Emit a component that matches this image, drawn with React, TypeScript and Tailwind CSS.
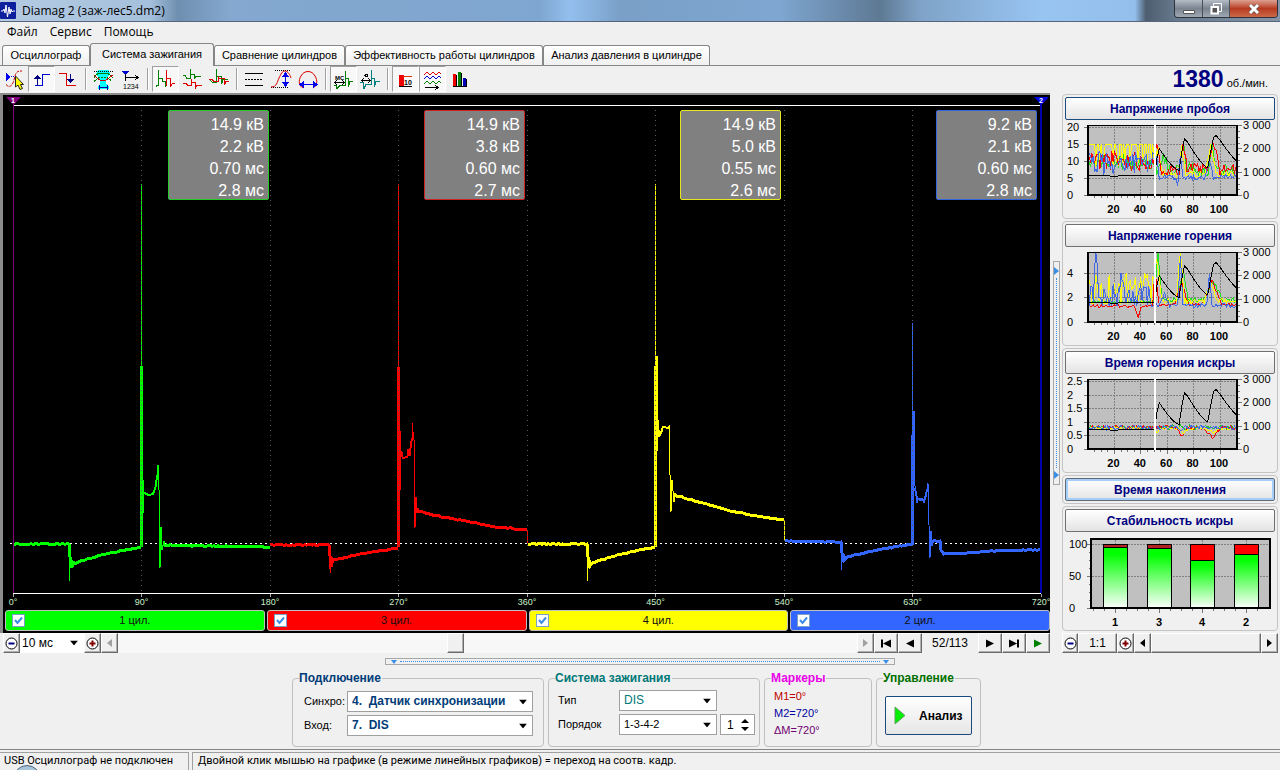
import { useState } from 'react';
import type { ReactNode } from 'react';

type Point = [number, number];

const GREEN = '#00ff00';
const RED = '#ff0000';
const YELLOW = '#ffff00';
const BLUE = '#3366ff';

const tabs = [
  { title: 'Осциллограф', width: 'w-[88px]' },
  { title: 'Система зажигания', width: 'w-[124px]' },
  { title: 'Сравнение цилиндров', width: 'w-[131px]' },
  { title: 'Эффективность работы цилиндров', width: 'w-[198px]' },
  { title: 'Анализ давления в цилиндре', width: 'w-[167px]' },
];

const cylinders = [
  { name: '1 цил.', bg: 'bg-[#00ff00]', border: 'border-[#22cc22]', values: ['14.9 кВ', '2.2 кВ', '0.70 мс', '2.8 мс'] },
  { name: '3 цил.', bg: 'bg-[#ff0000]', border: 'border-[#cc2222]', values: ['14.9 кВ', '3.8 кВ', '0.60 мс', '2.7 мс'] },
  { name: '4 цил.', bg: 'bg-[#ffff00]', border: 'border-[#e6e622]', values: ['14.9 кВ', '5.0 кВ', '0.55 мс', '2.6 мс'] },
  { name: '2 цил.', bg: 'bg-[#3366ff]', border: 'border-[#3366dd]', values: ['9.2 кВ', '2.1 кВ', '0.60 мс', '2.8 мс'] },
];

const degrees = ['0°', '90°', '180°', '270°', '360°', '450°', '540°', '630°', '720°'];

// simple repeatable noise, -1..1
const makeNoise = (seed: number) => {
  let s = seed;
  return () => {
    s = (s * 1103515245 + 12345) % 2147483648;
    return (s / 2147483648) * 2 - 1;
  };
};

// long pieces are cut in 2px steps and get a bit of noise
const trace = (points: Point[], seed: number) => {
  const noise = makeNoise(seed);
  let d = `M${points[0][0]} ${points[0][1]}`;
  for (let i = 1; i < points.length; i++) {
    const [x0, y0] = points[i - 1];
    const [x1, y1] = points[i];
    const steps = Math.floor((x1 - x0) / 2);
    if (steps > 3) {
      for (let k = 1; k < steps; k++) {
        const t = k / steps;
        d += `L${(x0 + (x1 - x0) * t).toFixed(1)} ${(y0 + (y1 - y0) * t + noise() * 0.5).toFixed(1)}`;
      }
    }
    d += `L${x1} ${y1}`;
  }
  return d;
};

const waves: { color: string; main: Point[]; spikes: string; thin: string }[] = [
  {
    color: GREEN,
    main: [[13, 544], [69, 544], [70, 557], [71, 568], [71, 560], [72, 567], [73, 561], [74, 564], [87, 559], [110, 553], [141, 547]],
    spikes: 'M141.5 366V547M142.5 480V513',
    thin: 'M69.5 544V581M141.5 184V366M142 488L143 492L146 493L148 495L152 494L155 488L157 475L158 465L159 490L159 562L160 568L161 527L162 550L164 541L165 545L167 543',
  },
  {
    color: RED,
    main: [[270, 545], [329, 545], [330, 556], [331, 567], [331, 557], [332, 563], [333, 560], [360, 554], [398, 548]],
    spikes: 'M398.5 367V547M399.5 431V490',
    thin: 'M329.5 545V565L330.5 573V556M398.5 184V367M400 450L402 452L403 458L407 457L408 449L410 456L411 447L412 438L412 423L414 440V515L415 528L416 497L417 513L418 508L419 511',
  },
  {
    color: YELLOW,
    main: [[528, 544], [587, 544], [588, 557], [589, 568], [589, 560], [590, 566], [592, 563], [617, 555], [655, 547]],
    spikes: 'M655.5 366V547M656.5 356V451',
    thin: 'M587.5 544V581M655.5 184V366M657 408L658 427L659 437L662 432L663 426L667 428L669 426V472L670 475L671 512L672 480L674 502L675 493L677 496M784.5 520V541',
  },
  {
    color: BLUE,
    main: [[785, 541], [841, 542], [842, 553], [842, 562], [843, 554], [844, 560], [847, 557], [873, 551], [912, 544]],
    spikes: 'M912.5 435V545M913.5 411V480',
    thin: 'M841.5 542V570M912.5 323V435M914 478L916 493L917 503L918 499L922 498L924 503L926 497L928 483L929 525L930 558L931 531L932 546L934 540',
  },
];

const tails: { color: string; points: Point[] }[] = [
  { color: GREEN, points: [[164, 545], [200, 546], [270, 547]] },
  { color: RED, points: [[417, 511], [437, 516], [470, 522], [497, 527], [527, 530]] },
  { color: YELLOW, points: [[674, 495], [703, 503], [730, 511], [757, 516], [784, 520]] },
  { color: BLUE, points: [[931, 541], [940, 541], [941, 550], [944, 554], [967, 553], [993, 551], [1041, 550]] },
];

// burn line between breakdown and spark end
const burns: { color: string; points: Point[] }[] = [
  { color: GREEN, points: [[143, 492], [146, 494], [149, 495], [153, 494], [156, 486], [157, 475]] },
  { color: RED, points: [[400, 450], [403, 458], [407, 457], [410, 452], [412, 438]] },
  { color: YELLOW, points: [[657, 410], [658, 428], [660, 435], [663, 427], [669, 428]] },
  { color: BLUE, points: [[915, 488], [917, 499], [922, 500], [924, 501], [928, 487]] },
];

const Scope = () => (
  <svg viewBox="3 95 1047 502" preserveAspectRatio="none" className="min-h-0 w-full flex-1" fill="none" shapeRendering="crispEdges">
    <path d="M13 105.5H1041M13 593.5H1041" stroke="#fff" />
    <path d="M10 543.5H1041" stroke="#fff" strokeDasharray="2 3" />
    {waves.map((w, i) => (
      <g key={w.color} stroke={w.color}>
        <path d={trace(w.main, 7 + i)} strokeWidth="3" />
        <path d={trace(tails[i].points, 31 + i)} strokeWidth="3" />
        <path d={trace(burns[i].points, 51 + i)} strokeWidth="2" />
        <path d={w.spikes} strokeWidth="3" />
        <path d={w.thin} />
      </g>
    ))}
    <path d="M527.5 530V543" stroke={RED} />
    <path
      d="M141.5 110V593M270.5 110V593M398.5 110V593M527.5 110V593M655.5 110V593M784.5 110V593M912.5 110V593"
      stroke="#5a5a5a"
      strokeDasharray="1 4"
    />
    <path d="M13.5 594v3M141.5 594v3M270.5 594v3M398.5 594v3M527.5 594v3M655.5 594v3M784.5 594v3M912.5 594v3M1041.5 594v3" stroke="#aaa" />
    <path d="M13.5 104V593" stroke="#800080" />
    <path d="M1041 104V593" stroke="#0000b0" strokeWidth="2" />
    <path d="M6 97H21L13.5 105Z" fill="#800080" shapeRendering="auto" />
    <path d="M1034 97H1049L1041.5 105Z" fill="#0000e0" shapeRendering="auto" />
    <text x="11" y="103" fontSize="7" fontWeight="700" fill="#fff">1</text>
    <text x="1039" y="103" fontSize="7" fontWeight="700" fill="#fff">2</text>
  </svg>
);

/* ---------- small charts ---------- */

const rpm: Point[] = [
  [0, 820], [15, 830], [19, 790], [25, 830], [40, 820], [50, 840], [51, 1000], [52, 1500], [54, 1970], [55, 1900], [60, 1500],
  [65, 1180], [69, 1040], [71, 1800], [73, 2400], [75, 2300], [80, 1850], [85, 1450], [90, 1170], [91, 1250], [93, 1900], [95, 2450],
  [97, 2550], [100, 2350], [105, 1950], [110, 1600], [113, 1440],
];

const px = (v: number) => 23 + v * 1.32;

const polyline = (values: number[], scale: number) =>
  values.map((v, i) => `${px(i + 1).toFixed(1)},${Math.max(6, 75 - v * scale).toFixed(1)}`).join(' ');

const near = (i: number, at: number, w: number) => Math.max(0, 1 - Math.abs(i - at) / w);

const build = (seed: number, fn: (i: number, n: number) => number) => {
  const noise = makeNoise(seed);
  return Array.from({ length: 112 }, (_, i) => fn(i + 1, noise()));
};

const breakdown = [
  { color: '#22dd22', data: build(3, (i, n) => (i < 52 ? 9.5 + n * 2.2 : Math.min(15, 7.5 + n * 2 + 4 * near(i, 57, 5) + 8 * near(i, 72, 3) + 8 * near(i, 94, 3)))) },
  { color: '#ffff00', data: build(19, (i, n) => (i < 52 ? (n > -0.2 ? 15 : 12 + n * 4) : Math.min(15, 6.3 + n * 1 + 8 * near(i, 53, 3) + 8 * near(i, 71, 3) + 8 * near(i, 93, 4)))) },
  { color: '#ff0000', data: build(11, (i, n) => (i < 52 ? 10.2 + n * 3 : Math.min(15, 7.6 + n * 1.7 + 7 * near(i, 52, 3) + 9 * near(i, 72, 3) + 9 * near(i, 95, 4)))) },
  { color: '#4169e1', data: build(29, (i, n) => (i < 52 ? 9.5 + n * 3.6 : Math.min(15, 5.2 + n * 0.8 + 6 * near(i, 52, 2) + 7 * near(i, 70, 2) + 5 * near(i, 92, 3) - 2 * near(i, 68, 2)))) },
];

const burning = [
  { color: '#22dd22', data: build(5, (i, n) => (i < 50 ? 1.65 + n * 0.1 : 1.8 + n * 0.2 + 3.8 * near(i, 53, 3) + 2.4 * near(i, 72, 4) + 1.5 * near(i, 95, 7))) },
  { color: '#ff0000', data: build(13, (i, n) => (i < 50 ? 1.3 + n * 0.12 - 0.8 * near(i, 38, 3) : 1.45 + n * 0.15 + 2.4 * near(i, 51, 3) + 1.8 * near(i, 71, 5) + 2 * near(i, 94, 7))) },
  { color: '#ffff00', data: build(23, (i, n) => (i < 50 ? Math.max(1.5, 2.4 + n * 1.6) : 1.7 + n * 0.2 + 3.6 * near(i, 52, 4) + 4.4 * near(i, 70, 3) + 1.6 * near(i, 93, 5))) },
  { color: '#4169e1', data: build(37, (i, n) => (i < 50 ? Math.max(1.3, 2 + n * 1.1) + 4 * near(i, 6, 2) + 2 * near(i, 26, 3) : 1.35 + n * 0.15 + near(i, 58, 4) + 4 * near(i, 70, 2) + 2.6 * near(i, 92, 2))) },
];

const duration = [
  { color: '#22cc22', data: build(41, (i, n) => 0.8 + n * (i < 52 ? 0.05 : 0.1)) },
  { color: '#ff0000', data: build(43, (i, n) => 0.79 + n * 0.08 - 0.35 * near(i, 71, 4) - 0.35 * near(i, 94, 6)) },
  { color: '#ffff00', data: build(47, (i, n) => 0.77 + n * 0.06 - 0.2 * near(i, 52, 3) - 0.2 * near(i, 72, 4) - 0.15 * near(i, 94, 5)) },
  { color: '#4169e1', data: build(53, (i, n) => 0.8 + n * 0.08 - 0.2 * near(i, 70, 3)) },
];

type TrendProps = {
  series: { color: string; data: number[] }[];
  scale: number;
  marks: { y: number; label: string }[];
};

const Trend = ({ series, scale, marks }: TrendProps) => (
  <svg width="210" height="96" viewBox="0 0 210 96" fontSize="11" className="block" fill="none">
    <g shapeRendering="crispEdges">
      <rect x="23" y="5" width="149" height="70" fill="#c0c0c0" />
      {marks.map((m) => (
        <g key={m.label}>
          <path d={`M24 ${m.y + 0.5}H171`} stroke="#808080" strokeDasharray="2 1" />
          <path d={`M19 ${m.y + 0.5}H22`} stroke="#777" />
        </g>
      ))}
      {[20, 40, 60, 80, 100].map((v) => (
        <g key={v}>
          <path d={`M${px(v)} 6V75`} stroke="#808080" strokeDasharray="2 1" />
          <path d={`M${px(v)} 76v4M${px(v - 5)} 76v2M${px(v - 10)} 76v2M${px(v - 15)} 76v2`} stroke="#777" />
        </g>
      ))}
      <path d="M173 5.5h4M173 28.5h4M173 52.5h4M173 75.5h4M173 11.5h2M173 17.5h2M173 23.5h2M173 34.5h2M173 40.5h2M173 46.5h2M173 58.5h2M173 64.5h2M173 69.5h2" stroke="#777" />
      {series.map((s) => (
        <polyline key={s.color} points={polyline(s.data, scale)} stroke={s.color} />
      ))}
      <polyline points={rpm.map(([v, r]) => `${px(v).toFixed(1)},${(75 - (r * 70) / 3000).toFixed(1)}`).join(' ')} stroke="#000" />
      <path d="M23 5.5H172" stroke="#000" />
      <path d="M23 5V76M172 5V76M22 75H173" stroke="#000" strokeWidth="2" />
      <path d="M90 5V76" stroke="#fff" strokeWidth="2" />
    </g>
    <g fill="#000">
      {marks.map((m) => (
        <text key={m.label} x="2" y={m.y + 4}>{m.label}</text>
      ))}
      <text x="178" y="9">3 000</text>
      <text x="178" y="32">2 000</text>
      <text x="178" y="56">1 000</text>
      <text x="178" y="79">0</text>
      {[20, 40, 60, 80, 100].map((v) => (
        <text key={v} x={px(v) - 1} y="93" textAnchor="middle" fontWeight="700">{v}</text>
      ))}
    </g>
  </svg>
);

const stability = [
  { label: '1', x: 38, split: 15, red: '#b22222' },
  { label: '3', x: 82, split: 16, red: '#b22222' },
  { label: '4', x: 125, split: 28, red: '#ff0000' },
  { label: '2', x: 169, split: 22, red: '#ff0000' },
];

const StabilityChart = () => (
  <svg width="210" height="96" viewBox="0 0 210 96" fontSize="11" className="block" fill="none">
    <defs>
      <linearGradient id="bar" x1="0" y1="0" x2="0" y2="1">
        <stop offset="0.1" stopColor="#00ff00" />
        <stop offset="1" stopColor="#ffffff" />
      </linearGradient>
    </defs>
    <g shapeRendering="crispEdges">
      <rect x="26" y="7" width="179" height="69" fill="#c0c0c0" />
      <path d="M27 12.5H204M27 44.5H204" stroke="#808080" strokeDasharray="2 1" />
      <path d="M50.5 8V76M94.5 8V76M137.5 8V76M181.5 8V76" stroke="#808080" strokeDasharray="2 1" />
      <path d="M22 12.5h4M22 44.5h4M22 76.5h4M24 20.5h2M24 28.5h2M24 36.5h2M24 52.5h2M24 60.5h2M24 68.5h2" stroke="#777" />
      <path d="M50.5 77v4M94.5 77v4M137.5 77v4M181.5 77v4M28.5 77v2M39.5 77v2M61.5 77v2M72.5 77v2M83.5 77v2M105.5 77v2M116.5 77v2M127.5 77v2M148.5 77v2M159.5 77v2M170.5 77v2M192.5 77v2" stroke="#777" />
      {stability.map((b) => (
        <g key={b.label} stroke="#000">
          <rect x={b.x + 0.5} y={12.5} width="24" height={b.split - 12} fill={b.red} />
          <rect x={b.x + 0.5} y={b.split + 0.5} width="24" height={76 - b.split} fill="url(#bar)" />
        </g>
      ))}
      <path d="M26 7H205M26 76H205M26 6V77M205 6V77" stroke="#000" strokeWidth="2" />
    </g>
    <g fill="#000">
      <text x="4" y="16">100</text>
      <text x="4" y="48">50</text>
      <text x="4" y="80">0</text>
      {stability.map((b) => (
        <text key={b.label} x={b.x + 12} y="94" textAnchor="middle" fontWeight="700">{b.label}</text>
      ))}
    </g>
  </svg>
);

/* ---------- toolbar ---------- */

const Glyph = ({ children }: { children: ReactNode }) => (
  <svg width="25" height="24" viewBox="0 0 25 24" fill="none" shapeRendering="crispEdges" className="block">
    {children}
  </svg>
);

const toolGroups: { label: string; pressed?: boolean; icon: ReactNode }[][] = [
  [
    {
      label: 'Уровень синхронизации',
      icon: (
        <Glyph>
          <path d="M4 6V14L9 10Z" fill="#0000ee" />
          <path d="M9 9.5H14" stroke="#0000ee" strokeDasharray="1 1" />
          <path d="M4 17.5C8 22 11 18 12.5 11S16 4 20 4" stroke="#cc0000" strokeDasharray="3 1" shapeRendering="auto" />
          <path d="M13.500 9V20L16 18L18 22.500L20.500 21.500L18.500 17.500H21.500Z" fill="#ffff00" stroke="#222" shapeRendering="auto" />
        </Glyph>
      ),
    },
    {
      label: 'По фронту',
      pressed: true,
      icon: (
        <Glyph>
          <path d="M6 18.5H13.5V7.5H21" stroke="#0000cc" />
          <path d="M8.5 8V18" stroke="#000080" />
          <path d="M5 12L8.5 8L12 12Z" fill="#000080" />
        </Glyph>
      ),
    },
    {
      label: 'По спаду',
      icon: (
        <Glyph>
          <path d="M3 6.5H10.5V18.5H20" stroke="#dd0000" />
          <path d="M14.5 7V16" stroke="#000080" />
          <path d="M11 12L14.5 16L18 12Z" fill="#000080" />
        </Glyph>
      ),
    },
  ],
  [
    {
      label: 'Фильтр',
      icon: (
        <Glyph>
          <path d="M7 3H18L19 7L15 13V17L18 19V22H7V19L9 17V13L5 7Z" fill="#00ffff" />
          <path d="M3 11L5 8L8 6H16L19 8L22 11" stroke="#008000" />
          <path d="M3 8L6 11L9 13H15L18 11L22 8" stroke="#cc0000" />
          <path d="M3 14.5L5 13L8 10H16L20 13.5" stroke="#008000" strokeDasharray="2 1" />
          <path d="M3 4.5H22" stroke="#000" strokeDasharray="1 1" />
          <path d="M8 20.5H17M8.5 18V23M16.5 18V23" stroke="#0000aa" />
        </Glyph>
      ),
    },
    {
      label: 'Маркер номера',
      icon: (
        <Glyph>
          <path d="M4 4H11L7.5 8Z" fill="#0000cc" />
          <path d="M7.5 7V14M8 10.5H20M17 8L20 10.5L17 13" stroke="#000" />
          <text x="5" y="22" fontSize="7" fill="#000">1234</text>
        </Glyph>
      ),
    },
  ],
  [
    {
      label: 'Последовательно',
      pressed: true,
      icon: (
        <Glyph>
          <path d="M3.5 19.5V18.500H5.5V3V11.5H9.500V14.5H12.5V20" stroke="#008000" />
          <path d="M13.5 19V3V11.5H17.5V20L19.5 16H21.5" stroke="#dd0000" />
        </Glyph>
      ),
    },
    {
      label: 'Друг под другом',
      icon: (
        <Glyph>
          <path d="M3 8.5H5L7 11.5H10.5V1.5V7.5H14.5V11.5L16 9.5H21" stroke="#008000" />
          <path d="M3 16.5H6L8 18.5H11.5V12V15.5H15.5V21L17 18.5H22" stroke="#dd0000" />
        </Glyph>
      ),
    },
    {
      label: 'Наложение',
      icon: (
        <Glyph>
          <path d="M3 13.5L6 15.5H9.5V2V9.5H14.5V17L16 12.5H21" stroke="#008000" />
          <path d="M2 12.5H5L7 14.5H11.5V9V11.5H17.5V18L19 14.5H22" stroke="#dd0000" />
        </Glyph>
      ),
    },
  ],
  [
    {
      label: 'Сетка',
      icon: (
        <Glyph>
          <path d="M3 6.5H21M3 18.5H21" stroke="#000" />
          <path d="M3 12.5H21" stroke="#000" strokeDasharray="2 1" />
        </Glyph>
      ),
    },
    {
      label: 'Масштаб по вертикали',
      icon: (
        <Glyph>
          <path d="M6 3.5H22M2 20.5H20" stroke="#000" strokeDasharray="1 1" />
          <path d="M2 20C8 20 8 15 10 11S13 4 16 4S21 8 22 11" stroke="#dd0000" shapeRendering="auto" />
          <path d="M16.5 8V17" stroke="#0000ee" />
          <path d="M13 10L16.5 5L20 10ZM13 15L16.5 20L20 15Z" fill="#0000ee" />
        </Glyph>
      ),
    },
    {
      label: 'Масштаб по горизонтали',
      icon: (
        <Glyph>
          <path d="M7 21C3 19 2 14 5 9C8 3 16 3 19 9C22 14 21 19 17 21" stroke="#dd0000" shapeRendering="auto" />
          <path d="M7 17.5H18" stroke="#0000ee" />
          <path d="M8 14V21L3 17.5ZM17 14V21L22 17.5Z" fill="#0000ee" />
        </Glyph>
      ),
    },
  ],
  [
    {
      label: 'Шкала времени',
      pressed: true,
      icon: (
        <Glyph>
          <text x="4" y="13" fontSize="6" fontWeight="700" fill="#000">MC</text>
          <path d="M4 15.5H13M6 13L4 15.5L6 18M11 13L13 15.5L11 18" stroke="#000" />
          <path d="M3 18.5H5L6 21.5L9 18.5H14.5V4V11.5H17.5V20L19 14.5H22" stroke="#008000" />
        </Glyph>
      ),
    },
    {
      label: 'Шкала градусов',
      icon: (
        <Glyph>
          <circle cx="8.5" cy="8.5" r="1.500" stroke="#000" />
          <path d="M4 13.5H12M6 11L4 13.5L6 16M10 11L12 13.5L10 16" stroke="#000" />
          <path d="M2 15.5H5L6 21.5L8 17.5H13.5V3V11.5H16.5V20L18 14.5H22" stroke="#008080" />
        </Glyph>
      ),
    },
  ],
  [
    {
      label: 'Значения',
      pressed: true,
      icon: (
        <Glyph>
          <path d="M6 8H11V19H6Z" fill="#ee0000" />
          <path d="M10 9.5H19" stroke="#dd3300" />
          <path d="M6 19.5H19" stroke="#000" />
          <text x="11" y="18" fontSize="7" fontWeight="700" fill="#000">10</text>
        </Glyph>
      ),
    },
    {
      label: 'Тренды',
      pressed: true,
      icon: (
        <Glyph>
          <path d="M4 8L7 5L10 8L13 5L16 8L19 5L21 7" stroke="#dd0000" shapeRendering="auto" />
          <path d="M4 12L7 9L10 12L13 9L16 12L19 9L21 11" stroke="#0000cc" shapeRendering="auto" />
          <path d="M4 17L7 14L10 17L13 14L16 17L19 14L21 16" stroke="#008000" shapeRendering="auto" />
          <path d="M5 20.5H18M15 18L18 20.5L15 23" stroke="#000" />
        </Glyph>
      ),
    },
    {
      label: 'Диаграмма',
      icon: (
        <Glyph>
          <path d="M6 7H9V19H6Z" fill="#ee0000" />
          <path d="M11 5H14V19H11Z" fill="#008000" />
          <path d="M16 11H19V19H16Z" fill="#0000bb" />
          <path d="M6 19.5H20M9.500 8V19M14.5 6V19M19.5 12V19" stroke="#000" />
        </Glyph>
      ),
    },
  ],
];

const Toolbar = () => (
  <div className="flex h-[27px] items-center justify-between pr-[12px] pl-px">
    <div className="flex h-full items-start">
      {toolGroups.map((group, g) => (
        <div key={g} className="flex items-start">
          {g > 0 && <div className="mx-[3px] mt-[2px] h-[22px] w-[2px] border-r border-l border-r-white border-l-[#a0a0a0]" />}
          {group.map((t) => (
            <button
              key={t.label}
              aria-label={t.label}
              className={
                t.pressed
                  ? 'h-[26px] w-[27px] border border-t-[#a0a0a0] border-r-white border-b-white border-l-[#a0a0a0] bg-[#f8f8f8]'
                  : 'h-[26px] w-[27px] border border-transparent'
              }
            >
              {t.icon}
            </button>
          ))}
        </div>
      ))}
    </div>
    <div className="flex items-baseline gap-[3px]">
      <span className="text-[23px] leading-[24px] font-bold text-[#000080]">1380</span>
      <span className="text-[11px]">об./мин.</span>
    </div>
  </div>
);

/* ---------- small controls ---------- */

const bevel = 'flex items-center justify-center border border-t-white border-r-[#696969] border-b-[#696969] border-l-white bg-[#f0f0f0] shadow-[inset_-1px_-1px_0_#b0b0b0]';

const ZoomGlyph = ({ plus }: { plus?: boolean }) => (
  <svg width="13" height="13" viewBox="0 0 13 13" fill="none">
    <circle cx="6.5" cy="6.5" r="5.5" fill="#fff" stroke="#000" />
    <path d={plus ? 'M3.5 6.5H9.5M6.5 3.5V9.5' : 'M3.5 6.5H9.5'} stroke={plus ? '#800000' : '#000080'} strokeWidth="2" />
  </svg>
);

const Arrow = ({ left, bar, color = '#000' }: { left?: boolean; bar?: boolean; color?: string }) => (
  <svg width="12" height="9" viewBox="0 0 12 9" fill={color} className={left ? 'rotate-180' : ''}>
    <path d={bar ? 'M1 0.5V8.5L9 4.5ZM9 0.5H11V8.5H9Z' : 'M2 0.5V8.5L10 4.5Z'} />
  </svg>
);

const SmallArrow = ({ left, color }: { left?: boolean; color: string }) => (
  <svg width="5" height="8" viewBox="0 0 5 8" fill={color} className={left ? 'rotate-180' : ''}>
    <path d="M0 0V8L5 4Z" />
  </svg>
);

const DownArrow = () => (
  <svg width="8" height="5" viewBox="0 0 8 5" className="pointer-events-none absolute top-1/2 right-[6px] -translate-y-1/2">
    <path d="M0 0H8L4 5Z" fill="#000" />
  </svg>
);

type PickerProps = { id: string; value: string; className: string };

const Picker = ({ id, value, className }: PickerProps) => (
  <div className={`relative ${className}`}>
    <select id={id} className="h-full w-full appearance-none border border-[#a0a0a0] bg-white pb-px pl-[4px] outline-none">
      <option>{value}</option>
    </select>
    <DownArrow />
  </div>
);

const CylinderBar = () => {
  const [shown, setShown] = useState([true, true, true, true]);

  return (
    <div className="grid h-[24px] grid-cols-4 gap-[2px] pt-px pb-[2px] pl-[2px]">
      {cylinders.map((c, i) => (
        <label key={c.name} className={`relative flex items-center justify-center rounded-[3px] border border-[#c0c0c0] text-[11px] text-[#101010] ${c.bg}`}>
          <input
            type="checkbox"
            checked={shown[i]}
            onChange={() => setShown(shown.map((s, k) => (k === i ? !s : s)))}
            className="peer absolute left-[6px] h-[13px] w-[13px] appearance-none border border-[#7aa0c8] bg-white"
          />
          <svg width="9" height="9" viewBox="0 0 9 9" fill="none" className="pointer-events-none absolute left-[8px] hidden peer-checked:block">
            <path d="M1 4L3.5 7L8 1.5" stroke="#3a8ee6" strokeWidth="2" />
          </svg>
          {c.name}
        </label>
      ))}
    </div>
  );
};

const ScopeNav = () => (
  <div className="flex h-[20px] items-stretch text-[12px]">
    <button aria-label="Уменьшить" className={`w-[17px] ${bevel}`}><ZoomGlyph /></button>
    <div className="relative w-[64px]">
      <select aria-label="Развёртка" className="h-full w-full appearance-none bg-white pl-[2px] outline-none">
        <option>10 мс</option>
      </select>
      <DownArrow />
    </div>
    <button aria-label="Увеличить" className={`w-[17px] ${bevel}`}><ZoomGlyph plus /></button>
    <button aria-label="Влево" className={`w-[17px] ${bevel}`}><SmallArrow left color="#a0a0a0" /></button>
    <div className="flex flex-1 bg-[#f7f7f7]">
      <div className="w-[329px]" />
      <div className={`w-[17px] ${bevel}`} />
    </div>
    <button aria-label="Вправо" className={`w-[17px] ${bevel}`}><SmallArrow color="#a0a0a0" /></button>
    <button aria-label="Первый кадр" className={`w-[24px] ${bevel}`}><Arrow left bar /></button>
    <button aria-label="Предыдущий кадр" className={`w-[24px] ${bevel}`}><Arrow left /></button>
    <span className="flex w-[56px] items-center justify-center">52/113</span>
    <button aria-label="Следующий кадр" className={`w-[24px] ${bevel}`}><Arrow /></button>
    <button aria-label="Последний кадр" className={`w-[24px] ${bevel}`}><Arrow bar /></button>
    <button aria-label="Воспроизвести" className={`w-[24px] ${bevel}`}><Arrow color="#008000" /></button>
  </div>
);

const TrendPanel = ({ title, active, children }: { title: string; active?: 'navy' | 'glow'; children?: ReactNode }) => (
  <section className="rounded-[4px] border border-[#c4c4c4] p-[2px]">
    <button
      className={`block h-[23px] w-full rounded-[2px] border bg-linear-to-b from-white to-[#e4e4e4] text-[12px] leading-[20px] font-bold text-[#000080] ${
        active === 'navy' ? 'border-[#1c4a7c]' : active === 'glow' ? 'border-[#606a78] shadow-[inset_0_0_0_2px_#a4cdf8]' : 'border-[#707070]'
      }`}
    >
      {title}
    </button>
    {children}
  </section>
);

const SidePanel = () => (
  <aside className="flex w-[216px] flex-col gap-[2px] pt-px">
    <TrendPanel title="Напряжение пробоя" active="navy">
      <Trend
        series={breakdown}
        scale={3.4}
        marks={[{ y: 7, label: '20' }, { y: 24, label: '15' }, { y: 41, label: '10' }, { y: 58, label: '5' }, { y: 75, label: '0' }]}
      />
    </TrendPanel>
    <TrendPanel title="Напряжение горения">
      <Trend series={burning} scale={12.25} marks={[{ y: 26, label: '4' }, { y: 50, label: '2' }, { y: 75, label: '0' }]} />
    </TrendPanel>
    <TrendPanel title="Время горения искры">
      <Trend
        series={duration}
        scale={27}
        marks={[{ y: 7, label: '2.5' }, { y: 21, label: '2' }, { y: 34, label: '1.5' }, { y: 48, label: '1' }, { y: 61, label: '0.5' }, { y: 75, label: '0' }]}
      />
    </TrendPanel>
    <TrendPanel title="Время накопления" active="glow" />
    <TrendPanel title="Стабильность искры">
      <StabilityChart />
    </TrendPanel>
    <div className="flex h-[20px] items-stretch text-[12px]">
      <button aria-label="Уменьшить" className={`w-[16px] ${bevel}`}><ZoomGlyph /></button>
      <button className={`w-[39px] ${bevel}`}>1:1</button>
      <button aria-label="Увеличить" className={`w-[17px] ${bevel}`}><ZoomGlyph plus /></button>
      <button aria-label="Влево" className={`w-[17px] ${bevel}`}><SmallArrow left color="#000" /></button>
      <div className={`flex-1 ${bevel}`} />
      <button aria-label="Вправо" className={`w-[17px] ${bevel}`}><SmallArrow color="#000" /></button>
    </div>
  </aside>
);

/* ---------- bottom ---------- */

const Group = ({ title, color, className, children }: { title: string; color: string; className: string; children: ReactNode }) => (
  <fieldset className={`h-[76px] rounded-[4px] border border-[#c0c0c0] ${className}`}>
    <legend className={`ml-[6px] pr-px text-[12px] leading-[14px] font-bold ${color}`}>{title}</legend>
    {children}
  </fieldset>
);

const Controls = () => (
  <div className="flex justify-center gap-[4px] pt-[6px] pr-[7px] text-[12px]">
    <Group title="Подключение" color="text-[#003c78]" className="w-[252px]">
      <div className="grid grid-cols-[39px_1fr] gap-x-[4px] gap-y-[3px] pt-[6px] pr-[10px] pl-[11px]">
        <label htmlFor="sync" className="self-center text-[11px]">Синхро:</label>
        <Picker id="sync" value="4.&nbsp; Датчик синхронизации" className="h-[21px] font-bold text-[#003c78]" />
        <label htmlFor="input" className="self-center text-[11px]">Вход:</label>
        <Picker id="input" value="7.&nbsp; DIS" className="h-[21px] font-bold text-[#003c78]" />
      </div>
    </Group>
    <Group title="Система зажигания" color="text-[#007878]" className="w-[212px]">
      <div className="flex flex-col gap-[3px] pt-[5px] pr-[4px] pl-[9px]">
        <div className="flex items-center">
          <label htmlFor="type" className="w-[61px] text-[11px]">Тип</label>
          <Picker id="type" value="DIS" className="h-[21px] w-[98px] text-[#007878]" />
        </div>
        <div className="flex items-center">
          <label htmlFor="order" className="w-[61px] text-[11px]">Порядок</label>
          <Picker id="order" value="1-3-4-2" className="h-[21px] w-[98px] text-[11px]" />
          <div className="ml-[3px] flex h-[21px] w-[35px] items-center border border-[#a0a0a0] bg-white">
            <input aria-label="Номер" defaultValue="1" className="w-[20px] pl-[6px] outline-none" />
            <span className="flex flex-col gap-[4px]">
              <button aria-label="Больше"><svg width="8" height="4" viewBox="0 0 8 4" className="block"><path d="M0 4H8L4 0Z" /></svg></button>
              <button aria-label="Меньше"><svg width="8" height="4" viewBox="0 0 8 4" className="block"><path d="M0 0H8L4 4Z" /></svg></button>
            </span>
          </div>
        </div>
      </div>
    </Group>
    <Group title="Маркеры" color="text-[#e800e8]" className="w-[108px]">
      <div className="flex flex-col gap-[3px] pt-[4px] pl-[9px] text-[11px] leading-[14px]">
        <span className="text-[#c00000]">M1=0°</span>
        <span className="text-[#0000a0]">M2=720°</span>
        <span className="text-[#700070]">ΔM=720°</span>
      </div>
    </Group>
    <Group title="Управление" color="text-[#007000]" className="w-[105px]">
      <button className="mt-[11px] ml-[8px] flex h-[39px] w-[87px] items-center gap-[13px] rounded-[2px] border border-[#1c4a7c] bg-linear-to-b from-white to-[#e6e6e6] pl-[8px] font-bold">
        <svg width="12" height="19" viewBox="0 0 12 19"><path d="M1 1V18L11 9.5Z" fill="#00f000" stroke="#60a060" /></svg>
        Анализ
      </button>
    </Group>
  </div>
);

const TitleBar = () => (
  <header className="flex h-[22px] items-start justify-between overflow-hidden border-b border-[#56657c] bg-[linear-gradient(90deg,#b4cbe2_0px,#a5c0dc_150px,#6f8fb0_178px,#84a8cf_230px,#7fa6d0_540px,#93bfee_570px,#7aa0c8_620px,#7ea6d0_780px,#5e7994_880px,#7fa3c8_920px,#98c4f2_1040px,#94bfec_1135px,#4e5e70_1146px,#66788c_1175px,#8696a8_100%)]">
    <div className="flex items-center pt-[2px]">
      <svg width="16" height="17" viewBox="0 0 16 17" fill="none">
        <rect width="16" height="17" rx="1" fill="#0c1f9c" />
        <path d="M1 9H3L4 7L5 11L6 3L7.5 15L9 5L10 12L11 7L12 10L13 9H15" stroke="#fff" />
      </svg>
      <h1 className="pl-[6px] font-['Open_Sans',sans-serif] text-[12px] leading-[17px]">Diamag 2 (заж-лес5.dm2)</h1>
    </div>
    <div className="mr-[2px] flex h-[18px] overflow-hidden rounded-b-[4px] border border-t-0 border-[#2c333c]">
      <button aria-label="Свернуть" className="flex w-[28px] items-center justify-center border-r border-[#4a5058] bg-linear-to-b from-[#b4bcc6] via-[#7a8490] to-[#a0a8b2]">
        <svg width="12" height="10" viewBox="0 0 12 10"><path d="M0.5 6.5H11.5V9.5H0.5Z" fill="#fff" stroke="#555" /></svg>
      </button>
      <button aria-label="Восстановить" className="flex w-[27px] items-center justify-center border-r border-[#4a5058] bg-linear-to-b from-[#b4bcc6] via-[#7a8490] to-[#a0a8b2]">
        <svg width="12" height="12" viewBox="0 0 12 12" fill="none">
          <path d="M3.5 3V0.5H11.5V8.5H9" stroke="#fff" />
          <path d="M1.5 4H8V10.5H1.5Z" fill="#555" stroke="#fff" strokeWidth="2" />
        </svg>
      </button>
      <button aria-label="Закрыть" className="flex w-[47px] items-center justify-center bg-linear-to-b from-[#dca090] via-[#b83a20] to-[#cc6848]">
        <svg width="12" height="10" viewBox="0 0 12 10"><path d="M2 1L10 9M10 1L2 9" stroke="#444" strokeWidth="4" /><path d="M2 1L10 9M10 1L2 9" stroke="#fff" strokeWidth="3" /></svg>
      </button>
    </div>
  </header>
);

const App = () => {
  const [tab, setTab] = useState(1);

  return (
    <div className="flex min-h-screen flex-col overflow-hidden bg-[#f0f0f0] font-['Liberation_Sans',Arial,sans-serif] text-[12px] text-black">
      <TitleBar />

      <nav className="flex h-[21px] items-center gap-[12px] pb-px pl-[7px] font-['Open_Sans',sans-serif] text-[12px]">
        <button>Файл</button>
        <button>Сервис</button>
        <button>Помощь</button>
      </nav>

      <div className="flex h-[23px] items-end border-b border-[#868686] pl-[2px] text-[11px]" role="tablist">
        {tabs.map((t, i) => (
          <button
            key={t.title}
            role="tab"
            aria-selected={tab === i}
            onClick={() => setTab(i)}
            className={`whitespace-nowrap rounded-t-[3px] border border-b-0 border-[#868686] ${t.width} ${
              tab === i ? '-mb-px h-[23px] bg-[#f0f0f0] pb-[2px]' : 'h-[20px] bg-linear-to-b from-white to-[#f0f0f0]'
            }`}
          >
            {t.title}
          </button>
        ))}
      </div>

      <Toolbar />

      <main className="flex flex-1 pr-[2px]">
        <div className="flex min-w-0 flex-1 flex-col">
          <div className="relative flex flex-1 flex-col border-t-2 border-l-3 border-[#8c8c8c] bg-black">
            <Scope />
            <div className="flex h-[12px] justify-between pr-[9px] pl-[10px] text-[9px] leading-[11px] text-[#c8f0c8]">
              {degrees.map((d) => (
                <span key={d} className="flex w-0 justify-center">{d}</span>
              ))}
            </div>
            <CylinderBar />
            <div className="pointer-events-none absolute top-[15px] right-[13px] left-[10px] grid grid-cols-4">
              {cylinders.map((c) => (
                <div key={c.name} className={`h-[90px] w-[101px] justify-self-end rounded-[2px] border bg-[#808080] pt-[3px] pr-[4px] text-right text-[16px] leading-[22px] text-white ${c.border}`}>
                  {c.values.map((v, i) => (
                    <p key={i}>{v}</p>
                  ))}
                </div>
              ))}
            </div>
          </div>
          <div className="pl-[3px]">
            <ScopeNav />
          </div>
        </div>

        <div className="flex w-[12px] items-center justify-center">
          <div className="flex h-[224px] w-[7px] flex-col items-center justify-between border border-[#a8a8a8] py-[5px]">
            <SmallArrow color="#3a8ee6" />
            <div className="my-[3px] flex-1 border-l border-dotted border-[#3a8ee6]" />
            <SmallArrow color="#3a8ee6" />
          </div>
        </div>

        <SidePanel />
      </main>

      <footer className="flex h-[117px] flex-col">
        <div className="mt-[5px] flex justify-center">
          <div className="flex h-[7px] w-[510px] items-center justify-between border border-[#a8a8a8] px-[5px]">
            <svg width="6" height="4" viewBox="0 0 6 4"><path d="M0 0H6L3 4Z" fill="#3a8ee6" /></svg>
            <div className="mx-[3px] flex-1 border-t border-dotted border-[#3a8ee6]" />
            <svg width="6" height="4" viewBox="0 0 6 4"><path d="M0 0H6L3 4Z" fill="#3a8ee6" /></svg>
          </div>
        </div>
        <div className="flex-1 border-b border-[#868686]">
          <Controls />
        </div>
        <div className="relative flex h-[20px] items-stretch gap-[3px] overflow-hidden pt-[2px] font-['Roboto',sans-serif] text-[11px] leading-[16px]">
          <span className="w-[189px] border-t border-r border-[#a0a0a0] pl-[4px] whitespace-nowrap">USB Осциллограф не подключен</span>
          <span className="flex-1 border-t border-l border-[#a0a0a0] pl-[5px]">
            Двойной клик мышью на графике (в режиме линейных графиков) = переход на соотв. кадр.
          </span>
          <div className="absolute top-[15px] left-[13px] h-[28px] w-[28px] rounded-full border border-[#506a80] bg-[#a8c4d8]" />
        </div>
      </footer>
    </div>
  );
};

export default App;
